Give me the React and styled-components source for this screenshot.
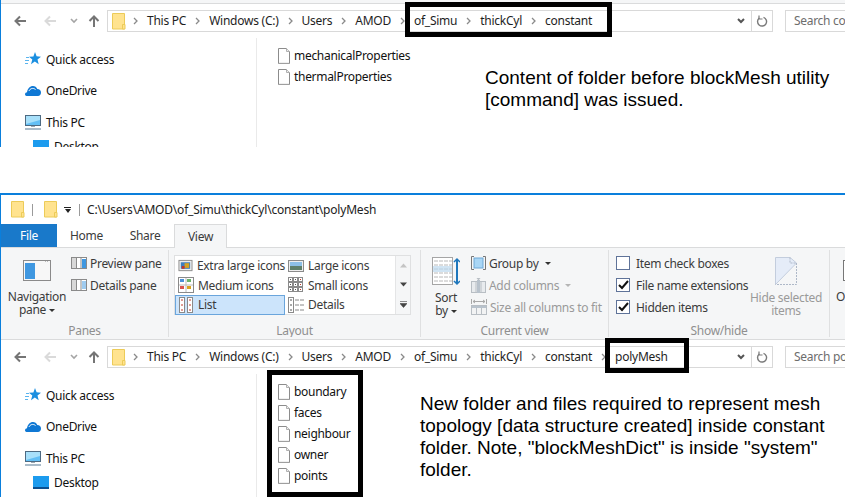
import styled, { createGlobalStyle } from "styled-components";

const GlobalStyle = createGlobalStyle`
    html, body {
        margin: 0;
        padding: 0;
        background: #FFF;
        overflow: hidden;
    }
    body {
        font-family: "Noto Sans", "Open Sans", sans-serif;
        font-size: 12px;
        letter-spacing: -0.3px;
    }
`

const Page = styled.div`
    position: relative;
    width: 845px;
    height: 497px;
    overflow: hidden;
    background: #FFF;
`

const Window = styled.section`
    border-left: 1px solid #0A7FDC;
    border-top: ${props => props.$framed ? "2px solid #0A7FDC" : "none"};
    margin-top: ${props => props.$gap || 0}px;
    overflow: hidden;
`

const TopStrip = styled.div`
    height: 3px;
    background: #F5F6F7;
    border-bottom: 1px solid #DADBDC;
`

const TitleBar = styled.div`
    height: 29px;
    display: flex;
    align-items: center;
    padding-left: 10px;
    color: #222;
`

const TitleDivider = styled.span`
    width: 1px;
    height: 12px;
    background: #9A9A9A;
    margin: 0 ${props => props.$right}px 0 ${props => props.$left}px;
`

const QuickMenu = styled.span`
    margin-left: 6px;
    width: 7px;
    flex: none;
    display: flex;
    flex-direction: column;
    gap: 1px;
    align-items: center;
    &::before {
        content: "";
        width: 7px;
        height: 1px;
        background: #222;
    }
    &::after {
        content: "";
        border-left: 3.5px solid transparent;
        border-right: 3.5px solid transparent;
        border-top: 4px solid #222;
    }
`

const TitlePath = styled.span`
    white-space: nowrap;
    letter-spacing: -0.2px;
`

const Tabs = styled.div`
    height: 23px;
    display: flex;
    align-items: stretch;
`

const FileTab = styled.div`
    width: 56px;
    background: #1979CA;
    color: #FFF;
    display: flex;
    align-items: center;
    justify-content: center;
`

const Tab = styled.div`
    width: ${props => props.$width}px;
    display: flex;
    align-items: center;
    justify-content: center;
    color: #3B3B3B;
    box-sizing: border-box;
    ${props => props.$active && `
        background: #F5F6F7;
        border: 1px solid #DADBDC;
        border-bottom: none;
        margin-bottom: -1px;
        position: relative;
    `}
`

const Ribbon = styled.div`
    height: 89px;
    padding: 2px 0 0;
    background: #F5F6F7;
    border-top: 1px solid #DADBDC;
    border-bottom: 1px solid #DADBDC;
    display: flex;
    align-items: flex-start;
    box-sizing: content-box;
    color: #3B3B3B;
`

const Group = styled.div`
    width: ${props => props.$width}px;
    flex: none;
    height: 87px;
    box-sizing: border-box;
    border-right: 1px solid #DFE0E1;
    display: flex;
    flex-direction: column;
    overflow: hidden;
`

const GroupBody = styled.div`
    flex: 1;
    display: flex;
    align-items: flex-start;
    min-height: 0;
`

const GroupLabel = styled.div`
    height: 15px;
    line-height: 15px;
    text-align: center;
    color: #8F8F8F;
    margin-bottom: -1px;
`

const BigButton = styled.div`
    width: ${props => props.$width}px;
    margin-left: ${props => props.$left || 0}px;
    padding-top: ${props => props.$top}px;
    flex: none;
    display: flex;
    flex-direction: column;
    align-items: center;
    text-align: center;
    line-height: 13px;
    white-space: nowrap;
    color: ${props => props.$muted ? "#9A9A9A" : "#3B3B3B"};
    svg {
        display: block;
        margin-bottom: ${props => props.$space || 9}px;
    }
`

const Caret = styled.i`
    display: inline-block;
    width: 0;
    height: 0;
    margin-left: 3px;
    vertical-align: 2px;
    border-left: 3px solid transparent;
    border-right: 3px solid transparent;
    border-top: 3px solid ${props => props.$muted ? "#B5B5B5" : "#333"};
`

const SmallStack = styled.div`
    width: ${props => props.$width ? `${props.$width}px` : "auto"};
    flex: none;
    margin-left: ${props => props.$left}px;
    padding-top: 2px;
    display: flex;
    flex-direction: column;
`

const SmallRow = styled.div`
    height: 22px;
    display: flex;
    align-items: center;
    gap: 3px;
    white-space: nowrap;
    color: ${props => props.$muted ? "#9A9A9A" : "#3B3B3B"};
`

const Gallery = styled.div`
    width: 237px;
    height: 60px;
    box-sizing: border-box;
    margin: 5px 0 0 5px;
    background: #FFF;
    border: 1px solid #DFE0E1;
    display: flex;
`

const GalleryGrid = styled.div`
    flex: 1;
    display: grid;
    grid-template-columns: 110px 110px;
    grid-auto-rows: 19.6px;
`

const GalleryItem = styled.div`
    display: flex;
    align-items: center;
    gap: 4px;
    padding-left: 3px;
    white-space: nowrap;
    box-sizing: border-box;
    ${props => props.$selected && `
        background: #CCE4FB;
        outline: 1px solid #6AA5DC;
        outline-offset: -1px;
    `}
`

const GalleryScroll = styled.div`
    width: 14px;
    flex: none;
    background: #F5F6F7;
    border-left: 1px solid #E4E5E6;
    display: flex;
    flex-direction: column;
    align-items: center;
    justify-content: space-around;
`

const CheckRow = styled.div`
    height: 22px;
    display: flex;
    align-items: center;
    gap: 6px;
    white-space: nowrap;
`

const CheckBox = styled.span`
    width: 14px;
    height: 14px;
    box-sizing: border-box;
    flex: none;
    background: #FFF;
    border: 1px solid #5F7399;
    display: flex;
    align-items: center;
    justify-content: center;
`

const Explorer = styled.div`
    height: ${props => props.$height}px;
    background: #FFF;
    overflow: hidden;
`

const NavRow = styled.div`
    height: 34px;
    display: flex;
    align-items: center;
    padding-left: 13px;
`

const NavArrows = styled.div`
    width: 93px;
    flex: none;
    display: flex;
    align-items: center;
`

const NavSpace = styled.span`
    width: ${props => props.$width}px;
    flex: none;
`

const AddressBar = styled.div`
    width: 666px;
    height: 22px;
    box-sizing: border-box;
    flex: none;
    border: 1px solid #D9D9D9;
    display: flex;
    align-items: center;
    padding-left: 4px;
    color: #1E1E1E;
`

const Crumbs = styled.div`
    flex: 1;
    display: flex;
    align-items: center;
    margin-left: -2px;
    padding-bottom: 2px;
    letter-spacing: -0.25px;
    white-space: nowrap;
`

const Crumb = styled.span`
    display: flex;
    align-items: center;
`

const Chevron = styled.svg`
    width: ${props => props.$gap}px;
    height: 8px;
    flex: none;
    margin-top: 2px;
`

const AddressTool = styled.div`
    width: 20px;
    height: 20px;
    flex: none;
    display: flex;
    align-items: center;
    justify-content: center;
    border-left: ${props => props.$divided ? "1px solid #D9D9D9" : "none"};
`

const SearchBox = styled.div`
    margin-left: 12px;
    width: 80px;
    height: 22px;
    flex: none;
    box-sizing: border-box;
    border: 1px solid #D9D9D9;
    padding-left: 8px;
    line-height: 20px;
    color: #6D6D6D;
    white-space: nowrap;
    overflow: hidden;
`

const Panes = styled.div`
    display: flex;
    align-items: flex-start;
`

const NavPane = styled.nav`
    width: 256px;
    height: 140px;
    flex: none;
    box-sizing: border-box;
    border-right: 1px solid #EAEAEA;
    padding: 11px 0 0 24px;
    display: flex;
    flex-direction: column;
    gap: 11.5px;
    color: #111;
`

const NavItem = styled.div`
    height: 20px;
    display: flex;
    align-items: center;
    gap: 5px;
    white-space: nowrap;
    margin-left: ${props => props.$indent ? 8 : 0}px;
    margin-top: ${props => props.$indent ? -7 : 0}px;
`

const FileList = styled.ul`
    list-style: none;
    width: 120px;
    flex: none;
    margin: 0 0 0 21px;
    padding: 7px 0 0;
`

const FileRow = styled.li`
    height: 21px;
    display: flex;
    align-items: center;
    gap: 4px;
    color: #111;
    white-space: nowrap;
    svg {
        flex: none;
    }
`

const Note = styled.p`
    margin: ${props => props.$top}px 0 0 ${props => props.$left}px;
    width: 425px;
    font-family: "Liberation Sans", Arial, sans-serif;
    font-size: 19px;
    letter-spacing: 0;
    line-height: 22px;
    color: #000;
`

/* black marker boxes drawn over the screenshot */
const Marker = styled.div`
    position: absolute;
    left: ${props => props.$x}px;
    top: ${props => props.$y}px;
    width: ${props => props.$w}px;
    height: ${props => props.$h}px;
    box-sizing: border-box;
    border: 5px solid #000;
`

const FolderIcon = () => (
    <svg width="14" height="17" viewBox="0 0 14 17">
        <path d="M.5.5h12v15.500H.5z" fill="#FFE38F" stroke="#ECCB58" />
        <path d="M10.500 11.500h2.500v4.500h-2.500z" fill="#FFE38F" stroke="#ECCB58" />
    </svg>
)

const FileIcon = () => (
    <svg width="12" height="16" viewBox="0 0 12 16">
        <path d="M.5.5h8l3 3v12H.5z" fill="#FFF" stroke="#8C8C8C" />
        <path d="M8.500.5v3h3" fill="#EEE" stroke="#B0B0B0" />
        <path d="M1 14h10v1.200H1z" fill="#F0F0F0" />
    </svg>
)

const StarIcon = () => (
    <svg width="16" height="16" viewBox="0 0 16 16">
        <path d="M10 1l1.600 4.300L16 5.700l-3.500 2.900 1.200 4.700-3.900-2.700L6 13.300l1.300-4.700L4 5.700l4.400-.3z" fill="#1B8FE0" />
        <path d="M1 6.500h3M0 9.500h4M0 12.500h3" stroke="#5AB4EE" />
    </svg>
)

const CloudIcon = () => (
    <svg width="16" height="11" viewBox="0 0 16 11">
        <path d="M1.500 11C.4 11 0 10 0 9.300 0 8 1 7.300 2 7.300 2.500 3.500 5 1 8 1c2 0 3.500 1 4.300 3 2.300 0 3.700 1.300 3.700 3.500 0 2-1.300 3.500-3 3.500z" fill="#0F78D4" />
        <path d="M4 6c1-2.500 4-3.500 6.500-1.500" fill="none" stroke="#FFF" />
    </svg>
)

const MonitorIcon = () => (
    <svg width="16" height="15" viewBox="0 0 16 15">
        <rect x=".5" y=".5" width="15" height="10" fill="#63BFF5" stroke="#4D6A82" />
        <path d="M1 1h14v4L1 9z" fill="#A8E0FA" />
        <path d="M6 11h4v1H6z" fill="#9AA8B3" />
        <path d="M0 13h16v2H0z" fill="#A9BBC9" />
    </svg>
)

const DesktopIcon = () => (
    <svg width="16" height="13" viewBox="0 0 16 13">
        <rect width="16" height="12" fill="#1C9BEE" />
        <rect y="11" width="16" height="2" fill="#0B4F8F" />
    </svg>
)

const NavArrow = ({ light, up }) => (
    <svg width="12" height="12" viewBox="0 0 12 12" style={up ? { transform: "rotate(90deg)" } : undefined}>
        <path d="M6 1.500L1.500 6 6 10.500M2 6h10" fill="none" stroke={light ? "#DADADA" : "#757575"} strokeWidth="2" />
    </svg>
)

const ChevronDown = ({ color = "#6E6E6E", width = 1.600 }) => (
    <svg width="8" height="6" viewBox="0 0 8 6">
        <path d="M1 1l3 3 3-3" fill="none" stroke={color} strokeWidth={width} />
    </svg>
)

const Refresh = () => (
    <svg width="12" height="12" viewBox="0 0 12 12">
        <path d="M7.500 2.300A4.500 4.500 0 1 1 3.300 3" fill="none" stroke="#7A7A7A" strokeWidth="1.400" />
        <path d="M3 .5v3.500h3.500" fill="none" stroke="#7A7A7A" strokeWidth="1.200" />
    </svg>
)

const Sep = () => (
    <Chevron $gap={23} viewBox="0 0 23 8">
        <path d="M10 1l3 3-3 3" fill="none" stroke="#8A8A8A" strokeWidth="1.300" />
    </Chevron>
)

const NavPaneIcon = () => (
    <svg width="28" height="21" viewBox="0 0 28 21">
        <rect x=".5" y=".5" width="27" height="20" fill="#F7F7F7" stroke="#8A8A8A" />
        <rect x="2" y="3" width="10" height="16" fill="#3F97E0" />
        <path d="M22 1.500h4" stroke="#BBB" strokeDasharray="1 1" />
    </svg>
)

const PaneIcon = ({ details }) => (
    <svg width="16" height="12" viewBox="0 0 16 12">
        <rect x=".5" y=".5" width="15" height="11" fill="#FFF" stroke="#8A8A8A" />
        <rect x="1" y="1" width="4" height="10" fill="#D8D8D8" />
        <path d="M5.500 1v10M10 1v10" stroke="#8A8A8A" />
        {details
            ? <path d="M11 3h4M11 5h4M11 7h4M11 9h4" stroke="#3F97E0" />
            : <rect x="11" y="2" width="4" height="9" fill="#3F97E0" />}
    </svg>
)

const GalleryIcon = ({ kind }) => {
    const cells = {
        medium: [[1, 1], [8, 1], [1, 8], [8, 8]],
        small: [[0, 0], [5, 0], [10, 0], [0, 5], [5, 5], [10, 5], [0, 10], [5, 10], [10, 10]],
    }
    return (
        <svg width="16" height="16" viewBox="0 0 16 16">
            {kind === "extra" && <>
                <rect x="1" y="2" width="14" height="11" fill="#EEE" stroke="#8A8A8A" />
                <rect x="3" y="4" width="10" height="7" fill="#3F7FBF" />
                <rect x="7" y="5" width="5" height="5" fill="#D9A320" />
                <rect x="4" y="8" width="3" height="3" fill="#C0392B" />
            </>}
            {kind === "large" && <>
                <rect x=".5" y="2.500" width="15" height="11" fill="#EEE" stroke="#8A8A8A" />
                <rect x="2" y="4" width="12" height="4" fill="#8CBFE6" />
                <rect x="2" y="8" width="12" height="4" fill="#5E7F6A" />
            </>}
            {kind === "medium" && <>
                <rect x=".5" y=".5" width="15" height="15" fill="#FFF" stroke="#8A8A8A" />
                <path d="M8 1v14M1 8h14" stroke="#BBB" />
                {cells.medium.map(([x, y], i) => (
                    <rect key={i} x={x + 1} y={y + 1} width="4" height="3" fill={["#4A90D9", "#6BB36B", "#D9534F", "#D9A320"][i]} />
                ))}
            </>}
            {kind === "small" && cells.small.map(([x, y], i) => (
                <g key={i}>
                    <rect x={x + .5} y={y + .5} width="4" height="4" fill="#FFF" stroke="#8A8A8A" />
                    <rect x={x + 2} y={y + 2} width="1" height="1" fill={i % 3 === 2 ? "#C0392B" : "#555"} />
                </g>
            ))}
            {kind === "list" && [1, 9].map(x => (
                <g key={x}>
                    <rect x={x + .5} y=".5" width="5" height="15" fill="#FFF" stroke="#8A8A8A" />
                    <path d={`M${x + 2} 3h2M${x + 2} 8h2M${x + 2} 13h2`} stroke="#C0392B" />
                </g>
            ))}
            {kind === "details" && <>
                <rect x=".5" y=".5" width="5" height="15" fill="#FFF" stroke="#8A8A8A" />
                <path d="M2 3h2M2 8h2M2 13h2" stroke="#555" />
                <path d="M7 3h9M7 8h9M7 13h9" stroke="#888" strokeDasharray="4 1" />
            </>}
        </svg>
    )
}

const ScrollArrow = ({ kind }) => (
    <svg width="7" height="7" viewBox="0 0 7 7">
        {kind === "up" && <path d="M3.500 1.500L7 5.500H0z" fill="#C4C4C4" />}
        {kind === "down" && <path d="M3.500 5.500L0 1.500h7z" fill="#444" />}
        {kind === "more" && <path d="M0 .5h7M3.500 6.500L0 2.500h7z" fill="#444" stroke="#444" strokeWidth=".6" />}
    </svg>
)

const SortIcon = () => (
    <svg width="28" height="29" viewBox="0 0 28 29">
        <rect x=".5" y=".5" width="20" height="27" fill="#FFF" stroke="#A5A5A5" />
        <path d="M2 4h18M2 8h18M2 12h18M2 16h18M2 20h18M2 24h18" stroke="#B8B8B8" strokeDasharray="4 1" />
        <rect x="1" y="9" width="19" height="6" fill="#BCD9EE" opacity=".7" />
        <path d="M25 2v25" stroke="#1F77BC" strokeWidth="2" />
        <path d="M22 5l3-3 3 3M22 24l3 3 3-3" fill="none" stroke="#1F77BC" strokeWidth="1.500" />
    </svg>
)

const GroupByIcon = () => (
    <svg width="15" height="14" viewBox="0 0 15 14">
        <path d="M3 .5H.5v13H3M12 .5h2.500v13H12" fill="none" stroke="#777" />
        <rect x="3" y="2" width="9" height="10" fill="#A9D6F5" stroke="#6FA8D6" />
    </svg>
)

const AddColumnsIcon = () => (
    <svg width="15" height="15" viewBox="0 0 15 15">
        <rect x=".5" y="3.500" width="14" height="11" fill="#E8EBEE" stroke="#B8BEC4" />
        <rect x="6" y="2" width="3" height="13" fill="#B8C2CC" />
        <path d="M5.500 0h4L7.500 2.500z" fill="#B8BEC4" />
        <path d="M5 4v10M10 4v10" stroke="#B8BEC4" />
    </svg>
)

const FitColumnsIcon = () => (
    <svg width="16" height="16" viewBox="0 0 16 16">
        <path d="M.5 0v5M15.500 0v5M2 2.500h12M4 1L2 2.500 4 4M12 1l2 1.500L12 4" fill="none" stroke="#A8A8A8" />
        <rect x=".5" y="6.500" width="15" height="9" fill="#F2F3F4" stroke="#B8BEC4" />
        <rect x="1" y="7" width="14" height="2" fill="#B8C2CC" />
        <path d="M5.500 9v6M10.500 9v6" stroke="#B8BEC4" />
    </svg>
)

const CheckMark = () => (
    <svg width="11" height="10" viewBox="0 0 11 10">
        <path d="M1 5l3 3 6-7" fill="none" stroke="#111" strokeWidth="2" />
    </svg>
)

const HideIcon = () => (
    <svg width="22" height="28" viewBox="0 0 22 28">
        <path d="M.5 27.500V.5H15l6.500 5.500L.5 27.500z" fill="#E5ECF8" stroke="#C3CDDD" />
        <path d="M15 .5v5.500h6.500v21.500H.5" fill="none" stroke="#AEB8C8" strokeDasharray="2 1" />
    </svg>
)

const OptionsIcon = styled.span`
    display: block;
    width: 24px;
    height: 21px;
    margin: 10px 0 9px 13px;
    border: 1px solid #777;
    background: #FFF;
    box-sizing: border-box;
`

const OptionsLabel = styled.div`
    margin-left: 6px;
    line-height: 13px;
    color: #3B3B3B;
    white-space: nowrap;
`

const PATH = ["This PC", "Windows (C:)", "Users", "AMOD", "of_Simu", "thickCyl", "constant", "polyMesh"]

const ExplorerView = ({ crumbs, search, height, files, children }) => (
    <Explorer $height={height}>
        <NavRow>
            <NavArrows>
                <NavArrow />
                <NavSpace $width={18} />
                <NavArrow light />
                <NavSpace $width={14} />
                <ChevronDown color="#A5A5A5" />
                <NavSpace $width={10} />
                <NavArrow up />
            </NavArrows>
            <AddressBar>
                <FolderIcon />
                <Crumbs>
                    {PATH.slice(0, crumbs).map(name => (
                        <Crumb key={name}>
                            <Sep />
                            {name}
                        </Crumb>
                    ))}
                </Crumbs>
                <AddressTool><ChevronDown color="#555" width={2} /></AddressTool>
                <AddressTool $divided><Refresh /></AddressTool>
            </AddressBar>
            <SearchBox>{search}</SearchBox>
        </NavRow>
        <Panes>
            <NavPane>
                <NavItem><StarIcon />Quick access</NavItem>
                <NavItem><CloudIcon />OneDrive</NavItem>
                <NavItem><MonitorIcon />This PC</NavItem>
                <NavItem $indent><DesktopIcon />Desktop</NavItem>
            </NavPane>
            <FileList>
                {files.map(file => (
                    <FileRow key={file}><FileIcon />{file}</FileRow>
                ))}
            </FileList>
            {children}
        </Panes>
    </Explorer>
)

const ViewRibbon = () => (
    <Ribbon>
        <Group $width={168}>
            <GroupBody>
                <BigButton $width={72} $top={10}>
                    <NavPaneIcon />
                    <span>Navigation<br />pane<Caret /></span>
                </BigButton>
                <SmallStack $left={-2}>
                    <SmallRow><PaneIcon />Preview pane</SmallRow>
                    <SmallRow><PaneIcon details />Details pane</SmallRow>
                </SmallStack>
            </GroupBody>
            <GroupLabel>Panes</GroupLabel>
        </Group>
        <Group $width={252}>
            <GroupBody>
                <Gallery>
                    <GalleryGrid>
                        <GalleryItem><GalleryIcon kind="extra" />Extra large icons</GalleryItem>
                        <GalleryItem><GalleryIcon kind="large" />Large icons</GalleryItem>
                        <GalleryItem><GalleryIcon kind="medium" />Medium icons</GalleryItem>
                        <GalleryItem><GalleryIcon kind="small" />Small icons</GalleryItem>
                        <GalleryItem $selected><GalleryIcon kind="list" />List</GalleryItem>
                        <GalleryItem><GalleryIcon kind="details" />Details</GalleryItem>
                    </GalleryGrid>
                    <GalleryScroll>
                        <ScrollArrow kind="up" />
                        <ScrollArrow kind="down" />
                        <ScrollArrow kind="more" />
                    </GalleryScroll>
                </Gallery>
            </GroupBody>
            <GroupLabel>Layout</GroupLabel>
        </Group>
        <Group $width={188}>
            <GroupBody>
                <BigButton $width={40} $left={5} $top={7} $space={5}>
                    <SortIcon />
                    <span>Sort<br />by<Caret /></span>
                </BigButton>
                <SmallStack $left={5}>
                    <SmallRow><GroupByIcon />Group by<Caret /></SmallRow>
                    <SmallRow $muted><AddColumnsIcon />Add columns<Caret $muted /></SmallRow>
                    <SmallRow $muted><FitColumnsIcon />Size all columns to fit</SmallRow>
                </SmallStack>
            </GroupBody>
            <GroupLabel>Current view</GroupLabel>
        </Group>
        <Group $width={221}>
            <GroupBody>
                <SmallStack $left={7} $width={134}>
                    <CheckRow><CheckBox />Item check boxes</CheckRow>
                    <CheckRow><CheckBox><CheckMark /></CheckBox>File name extensions</CheckRow>
                    <CheckRow><CheckBox><CheckMark /></CheckBox>Hidden items</CheckRow>
                </SmallStack>
                <BigButton $width={72} $top={7} $space={6} $muted>
                    <HideIcon />
                    <span>Hide selected<br />items</span>
                </BigButton>
            </GroupBody>
            <GroupLabel>Show/hide</GroupLabel>
        </Group>
        <div>
            <OptionsIcon />
            <OptionsLabel>Options</OptionsLabel>
        </div>
    </Ribbon>
)

const App = () => (
    <Page>
        <GlobalStyle />
        <Window>
            <TopStrip />
            <ExplorerView crumbs={7} search="Search constant" height={143} files={["mechanicalProperties", "thermalProperties"]}>
                <Note $top={29} $left={87}>
                    Content of folder before blockMesh utility<br />
                    [command] was issued.
                </Note>
            </ExplorerView>
        </Window>
        <Window $framed $gap={46}>
            <TitleBar>
                <FolderIcon />
                <TitleDivider $left={7} $right={11} />
                <FolderIcon />
                <QuickMenu />
                <TitleDivider $left={8} $right={7} />
                <TitlePath>C:\Users\AMOD\of_Simu\thickCyl\constant\polyMesh</TitlePath>
            </TitleBar>
            <Tabs>
                <FileTab>File</FileTab>
                <Tab $width={59}>Home</Tab>
                <Tab $width={58}>Share</Tab>
                <Tab $width={53} $active>View</Tab>
            </Tabs>
            <ViewRibbon />
            <ExplorerView crumbs={8} search="Search polyMesh" height={157} files={["boundary", "faces", "neighbour", "owner", "points"]}>
                <Note $top={19} $left={22}>
                    New folder and files required to represent mesh<br />
                    topology [data structure created] inside constant<br />
                    folder. Note, "blockMeshDict" is inside "system"<br />
                    folder.
                </Note>
            </ExplorerView>
        </Window>
        <Marker $x={405} $y={2} $w={207} $h={35} />
        <Marker $x={605} $y={338} $w={84} $h={35} />
        <Marker $x={267} $y={370} $w={96} $h={127} />
    </Page>
)

export default App;
